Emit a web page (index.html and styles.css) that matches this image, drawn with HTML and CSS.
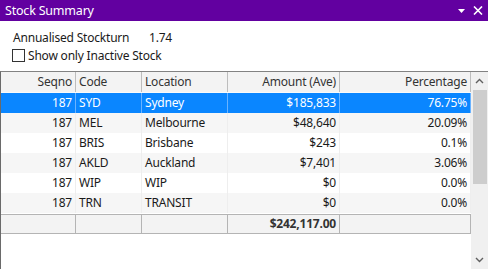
FILE: index.html
```html
<!DOCTYPE html>
<html>
<head>
<meta charset="utf-8">
<link rel="stylesheet" href="styles.css">
</head>
<body>
<div class="window">
  <div class="titlebar">
    <span class="title">Stock Summary</span>
    <span class="tools">
      <svg class="drop" width="7" height="4" viewBox="0 0 7 4"><path d="M0 0H7L3.5 4Z" fill="#fff"/></svg>
      <svg class="close" width="10" height="9" viewBox="0 0 10 9"><path d="M1 0.5L9 8.5M9 0.5L1 8.5" stroke="#fff" stroke-width="1.6"/></svg>
    </span>
  </div>
  <div class="info">
    <div class="stat"><span class="stat-label">Annualised Stockturn</span><span class="stat-value">1.74</span></div>
    <label class="check"><span class="box"></span><span>Show only Inactive Stock</span></label>
  </div>
  <div class="grid-wrap">
    <div class="grid">
      <div class="row head">
        <div class="c r">Seqno</div><div class="c">Code</div><div class="c">Location</div><div class="c r">Amount (Ave)</div><div class="c r">Percentage</div>
      </div>
      <div class="row sel">
        <div class="c r">187</div><div class="c">SYD</div><div class="c">Sydney</div><div class="c r">$185,833</div><div class="c r">76.75%</div>
      </div>
      <div class="row alt">
        <div class="c r">187</div><div class="c">MEL</div><div class="c">Melbourne</div><div class="c r">$48,640</div><div class="c r">20.09%</div>
      </div>
      <div class="row">
        <div class="c r">187</div><div class="c">BRIS</div><div class="c">Brisbane</div><div class="c r">$243</div><div class="c r">0.1%</div>
      </div>
      <div class="row alt">
        <div class="c r">187</div><div class="c">AKLD</div><div class="c">Auckland</div><div class="c r">$7,401</div><div class="c r">3.06%</div>
      </div>
      <div class="row">
        <div class="c r">187</div><div class="c">WIP</div><div class="c">WIP</div><div class="c r">$0</div><div class="c r">0.0%</div>
      </div>
      <div class="row alt">
        <div class="c r">187</div><div class="c">TRN</div><div class="c">TRANSIT</div><div class="c r">$0</div><div class="c r">0.0%</div>
      </div>
      <div class="row total">
        <div class="c"></div><div class="c"></div><div class="c"></div><div class="c r b">$242,117.00</div><div class="c"></div>
      </div>
    </div>
    <div class="scrollbar">
      <svg class="arrow" width="9" height="6" viewBox="0 0 9 6"><path d="M1 5L4.5 1.5L8 5" fill="none" stroke="#606060" stroke-width="1.4"/></svg>
      <div class="track"><div class="thumb"></div></div>
      <svg class="arrow" width="9" height="6" viewBox="0 0 9 6"><path d="M1 1L4.5 4.5L8 1" fill="none" stroke="#606060" stroke-width="1.4"/></svg>
    </div>
  </div>
</div>
</body>
</html>
```

FILE: styles.css
```css
* { box-sizing: border-box; }
html, body { margin: 0; padding: 0; background: #fff; }
body {
  font-family: "Noto Sans", "Open Sans", sans-serif;
  font-size: 12px;
  letter-spacing: -0.2px;
  color: #1a1a1a;
  width: 488px;
  height: 269px;
  overflow: hidden;
}
.window { display: flex; flex-direction: column; height: 269px; }
.titlebar {
  height: 21px;
  background: #6200a0;
  color: #fff;
  display: flex;
  align-items: center;
  justify-content: space-between;
  padding: 0 5px 0 5px;
  font-size: 12.5px;
}
.title { line-height: 21px; }
.tools { display: flex; align-items: center; gap: 8px; }
.drop { margin-top: 1px; }
.info { padding: 7px 0 0 13px; height: 50px; }
.stat { display: flex; height: 18px; align-items: center; }
.stat-label { width: 136px; }
.check { display: flex; align-items: center; margin-left: -1px; margin-top: 2px; height: 14px; gap: 3px; }
.box { width: 13px; height: 13px; border: 1px solid #333; background: #fff; display: inline-block; }
.grid-wrap {
  flex: 1;
  display: flex;
  border-top: 1px solid #828282;
  border-left: 1px solid #6a6a6a;
  min-height: 0;
}
.grid { width: 470px; display: flex; flex-direction: column; }
.row {
  display: grid;
  grid-template-columns: 75px 66px 86px 112px 131px;
  height: 20px;
  background: #fff;
}
.row.alt { background: #f6f6f6; }
.c {
  padding: 0 3px 0 3px;
  line-height: 19px;
  white-space: nowrap;
  overflow: hidden;
  border-right: 1px solid #eeeeee;
}
.c.r { text-align: right; }
.head { height: 21px; background: #f3f3f3; color: #333; border-bottom: 1px solid #fafafa; }
.head .c { border-right: 1px solid #bdbdbd; line-height: 20px; }
.sel { background: #0a86ff; color: #fff; }
.sel .c { border-right: 1px solid #6ab3ff; }
.total {
  margin-top: 1px;
  background: #f3f3f3;
  border-top: 1px solid #b4b4b4;
  border-bottom: 1px solid #b4b4b4;
  height: 20px;
}
.total .c { border-right: 1px solid #b4b4b4; line-height: 18px; }
.b { font-weight: bold; color: #333; }
.scrollbar {
  width: 17px;
  background: #f0f0f0;
  display: flex;
  flex-direction: column;
  align-items: center;
}
.arrow { margin: 6px 0; flex: none; }
.track { flex: 1; width: 100%; padding: 0 1px 0 2px; }
.thumb { height: 94px; margin-top: 0; background: #cdcdcd; }
```
